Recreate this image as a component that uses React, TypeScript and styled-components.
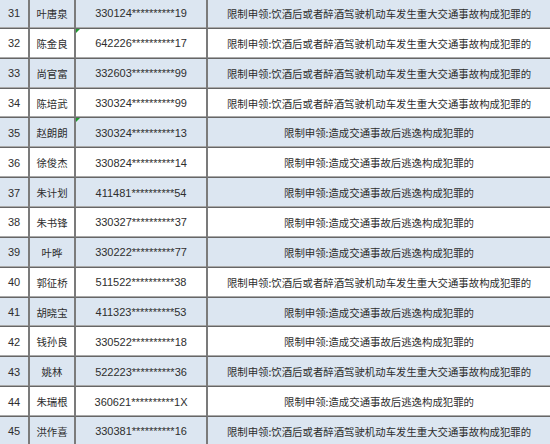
import styled, { createGlobalStyle } from 'styled-components';

const GlobalStyle = createGlobalStyle`
  html, body {
    margin: 0;
    padding: 0;
    background: #ffffff;
  }
  body {
    width: 550px;
    height: 444px;
    overflow: hidden;
  }
`;

type Record = {
  no: number;
  name: string;
  id: string;
  reason: 'drunk' | 'escape';
  flagged?: boolean;
};

const REASONS = {
  drunk: '限制申领:饮酒后或者醉酒驾驶机动车发生重大交通事故构成犯罪的',
  escape: '限制申领:造成交通事故后逃逸构成犯罪的',
};

const records: Record[] = [
  { no: 31, name: '叶唐泉', id: '330124**********19', reason: 'drunk' },
  { no: 32, name: '陈金良', id: '642226**********17', reason: 'drunk', flagged: true },
  { no: 33, name: '尚官富', id: '332603**********99', reason: 'drunk' },
  { no: 34, name: '陈培武', id: '330324**********99', reason: 'drunk' },
  { no: 35, name: '赵朗朗', id: '330324**********13', reason: 'escape', flagged: true },
  { no: 36, name: '徐俊杰', id: '330824**********14', reason: 'escape' },
  { no: 37, name: '朱计划', id: '411481**********54', reason: 'escape' },
  { no: 38, name: '朱书锋', id: '330327**********37', reason: 'escape' },
  { no: 39, name: '叶晔', id: '330222**********77', reason: 'escape' },
  { no: 40, name: '郭征桥', id: '511522**********38', reason: 'drunk' },
  { no: 41, name: '胡晓宝', id: '411323**********53', reason: 'escape' },
  { no: 42, name: '钱孙良', id: '330522**********18', reason: 'escape' },
  { no: 43, name: '姚林', id: '522223**********36', reason: 'drunk' },
  { no: 44, name: '朱瑞根', id: '360621**********1X', reason: 'escape' },
  { no: 45, name: '洪作喜', id: '330381**********16', reason: 'drunk' },
];

const Sheet = styled.div`
  display: grid;
  grid-template-columns: 30px 46px 132px 1fr;
  grid-auto-rows: 29.86px;
  width: 550px;
  margin-top: -1px;
  font-family: 'Microsoft YaHei', 'Noto Sans CJK SC', 'Noto Sans', sans-serif;
  font-size: 10.4px;
  color: #2e2e2e;
`;

const Cell = styled.div<{ $shaded: boolean; $flagged?: boolean }>`
  position: relative;
  display: flex;
  align-items: center;
  justify-content: center;
  box-sizing: border-box;
  white-space: nowrap;
  background: ${({ $shaded }) => ($shaded ? '#dce6f1' : '#ffffff')};
  border-right: 2px solid #7b7b7b;
  border-bottom: 1px solid #666666;
  box-shadow: inset 0 -1px 0 #aaaaaa;

  &:nth-child(4n) {
    border-right: none;
  }

  &::before {
    content: '';
    display: ${({ $flagged }) => ($flagged ? 'block' : 'none')};
    position: absolute;
    top: 0;
    left: 0;
    border-top: 4px solid #1f9a2e;
    border-right: 4px solid transparent;
  }
`;

const Number = styled.span`
  font-family: 'Liberation Sans', 'Noto Sans', sans-serif;
  font-size: 11px;
`;

const Id = styled.span`
  font-family: 'Liberation Sans', 'Noto Sans', sans-serif;
  font-size: 11px;
`;

const App = () => (
  <>
    <GlobalStyle />
    <Sheet>
      {records.map((r) => {
        const shaded = r.no % 2 === 1;
        return [
          <Cell key={`${r.no}-no`} $shaded={shaded}>
            <Number>{r.no}</Number>
          </Cell>,
          <Cell key={`${r.no}-name`} $shaded={shaded}>
            {r.name}
          </Cell>,
          <Cell key={`${r.no}-id`} $shaded={shaded} $flagged={r.flagged}>
            <Id>{r.id}</Id>
          </Cell>,
          <Cell key={`${r.no}-reason`} $shaded={shaded}>
            {REASONS[r.reason]}
          </Cell>,
        ];
      })}
    </Sheet>
  </>
);

export default App;
